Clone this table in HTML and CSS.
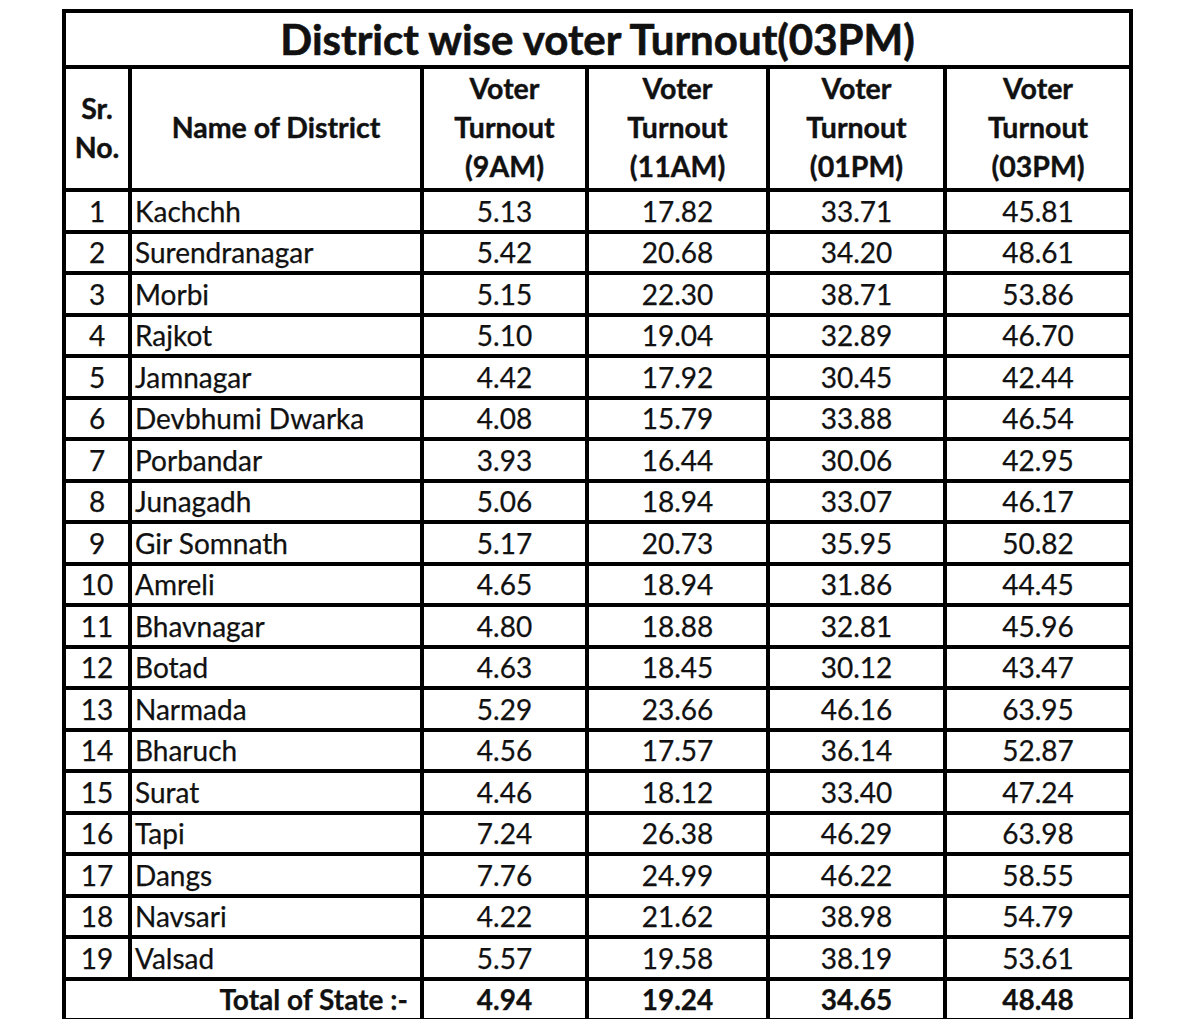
FILE: index.html
```html
<!DOCTYPE html>
<html lang="en">
<head>
<meta charset="utf-8">
<title>District wise voter Turnout(03PM)</title>
<link rel="stylesheet" href="styles.css">
</head>
<body>
<table class="turnout">
  <colgroup>
    <col class="c-sr">
    <col class="c-name">
    <col class="c-v1">
    <col class="c-v2">
    <col class="c-v3">
    <col class="c-v4">
  </colgroup>
  <thead>
    <tr class="title-row"><th colspan="6">District wise voter Turnout(03PM)</th></tr>
    <tr class="head-row">
      <th>Sr.<br>No.</th>
      <th>Name of District</th>
      <th>Voter<br>Turnout<br>(9AM)</th>
      <th>Voter<br>Turnout<br>(11AM)</th>
      <th>Voter<br>Turnout<br>(01PM)</th>
      <th>Voter<br>Turnout<br>(03PM)</th>
    </tr>
  </thead>
  <tbody>
    <tr><td class="sr">1</td><td class="name">Kachchh</td><td>5.13</td><td>17.82</td><td>33.71</td><td>45.81</td></tr>
    <tr><td class="sr">2</td><td class="name">Surendranagar</td><td>5.42</td><td>20.68</td><td>34.20</td><td>48.61</td></tr>
    <tr><td class="sr">3</td><td class="name">Morbi</td><td>5.15</td><td>22.30</td><td>38.71</td><td>53.86</td></tr>
    <tr><td class="sr">4</td><td class="name">Rajkot</td><td>5.10</td><td>19.04</td><td>32.89</td><td>46.70</td></tr>
    <tr><td class="sr">5</td><td class="name">Jamnagar</td><td>4.42</td><td>17.92</td><td>30.45</td><td>42.44</td></tr>
    <tr><td class="sr">6</td><td class="name">Devbhumi Dwarka</td><td>4.08</td><td>15.79</td><td>33.88</td><td>46.54</td></tr>
    <tr><td class="sr">7</td><td class="name">Porbandar</td><td>3.93</td><td>16.44</td><td>30.06</td><td>42.95</td></tr>
    <tr><td class="sr">8</td><td class="name">Junagadh</td><td>5.06</td><td>18.94</td><td>33.07</td><td>46.17</td></tr>
    <tr><td class="sr">9</td><td class="name">Gir Somnath</td><td>5.17</td><td>20.73</td><td>35.95</td><td>50.82</td></tr>
    <tr><td class="sr">10</td><td class="name">Amreli</td><td>4.65</td><td>18.94</td><td>31.86</td><td>44.45</td></tr>
    <tr><td class="sr">11</td><td class="name">Bhavnagar</td><td>4.80</td><td>18.88</td><td>32.81</td><td>45.96</td></tr>
    <tr><td class="sr">12</td><td class="name">Botad</td><td>4.63</td><td>18.45</td><td>30.12</td><td>43.47</td></tr>
    <tr><td class="sr">13</td><td class="name">Narmada</td><td>5.29</td><td>23.66</td><td>46.16</td><td>63.95</td></tr>
    <tr><td class="sr">14</td><td class="name">Bharuch</td><td>4.56</td><td>17.57</td><td>36.14</td><td>52.87</td></tr>
    <tr><td class="sr">15</td><td class="name">Surat</td><td>4.46</td><td>18.12</td><td>33.40</td><td>47.24</td></tr>
    <tr><td class="sr">16</td><td class="name">Tapi</td><td>7.24</td><td>26.38</td><td>46.29</td><td>63.98</td></tr>
    <tr><td class="sr">17</td><td class="name">Dangs</td><td>7.76</td><td>24.99</td><td>46.22</td><td>58.55</td></tr>
    <tr><td class="sr">18</td><td class="name">Navsari</td><td>4.22</td><td>21.62</td><td>38.98</td><td>54.79</td></tr>
    <tr><td class="sr">19</td><td class="name">Valsad</td><td>5.57</td><td>19.58</td><td>38.19</td><td>53.61</td></tr>
    <tr class="total-row"><td colspan="2" class="total-label">Total of State :-</td><td>4.94</td><td>19.24</td><td>34.65</td><td>48.48</td></tr>
  </tbody>
</table>
</body>
</html>
```
FILE: styles.css
```css
html, body {
  margin: 0;
  padding: 0;
  background: #fff;
}

body {
  padding: 9px 0 0 62px;
  font-family: Lato, "Open Sans", sans-serif;
  color: #111;
}

.turnout {
  border-collapse: separate;
  border-spacing: 0;
  table-layout: fixed;
  width: 1071px;
  border-top: 4px solid #000;
  border-left: 4px solid #000;
}

.c-sr { width: 66px; }
.c-name { width: 292px; }
.c-v1 { width: 165px; }
.c-v2 { width: 181px; }
.c-v3 { width: 177px; }
.c-v4 { width: 186px; }

.turnout th,
.turnout td {
  border-right: 4px solid #000;
  border-bottom: 4px solid #000;
  padding: 0;
  text-align: center;
  vertical-align: middle;
  box-sizing: border-box;
  -webkit-text-stroke: 0.25px #111;
}

.title-row th {
  height: 56px;
  font-size: 42px;
  font-weight: 700;
  line-height: 42px;
  -webkit-text-stroke: 0.6px #111;
}

.head-row th {
  height: 123px;
  font-size: 28.5px;
  font-weight: 700;
  line-height: 39px;
  padding-bottom: 2px;
  -webkit-text-stroke: 0.4px #111;
}

.turnout td {
  height: 41.5px;
  font-size: 28px;
  line-height: 30px;
}

.turnout td.name {
  text-align: left;
  padding-left: 3px;
}

.total-row td {
  font-weight: 700;
}

.turnout td.total-label {
  text-align: right;
  padding-right: 12px;
}
```
